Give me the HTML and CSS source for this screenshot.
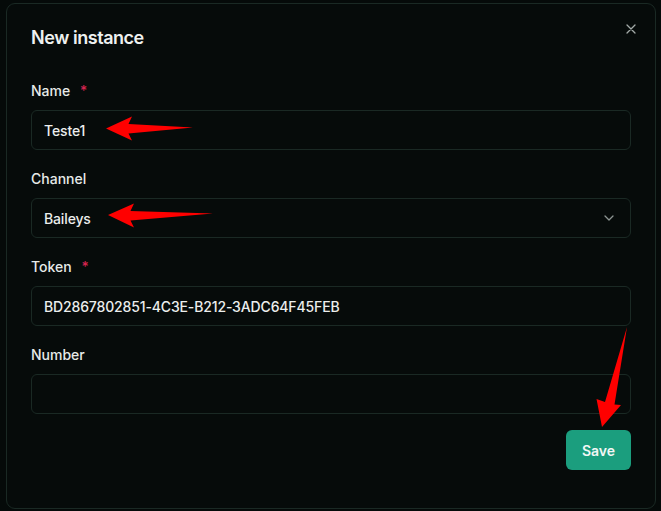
FILE: index.html
```html
<!DOCTYPE html>
<html lang="en">
<head>
    <meta charset="UTF-8">
    <meta name="viewport" content="width=device-width, initial-scale=1.0">
    <title>New instance</title>
    <link rel="stylesheet" href="styles.css">
</head>
<body>
    <div class="dialog">
        <button class="close" aria-label="Close">
            <svg width="10" height="10" viewBox="0 0 10 10"><path d="M1 1L9 9M9 1L1 9" stroke="#a3aaa8" stroke-width="1.3" stroke-linecap="round"/></svg>
        </button>
        <h2 class="title">New instance</h2>

        <form class="form">
            <div class="field">
                <label>Name <span class="req">*</span></label>
                <div class="input">Teste1</div>
            </div>
            <div class="field">
                <label>Channel</label>
                <div class="input select">
                    <span>Baileys</span>
                    <svg width="10" height="6" viewBox="0 0 10 6"><path d="M1 1L5 5L9 1" fill="none" stroke="#8d9593" stroke-width="1.3" stroke-linecap="round" stroke-linejoin="round"/></svg>
                </div>
            </div>
            <div class="field">
                <label>Token <span class="req">*</span></label>
                <div class="input">BD2867802851-4C3E-B212-3ADC64F45FEB</div>
            </div>
            <div class="field last">
                <label>Number</label>
                <div class="input"></div>
            </div>
            <div class="actions">
                <button type="button" class="save">Save</button>
            </div>
        </form>
    </div>

    <!-- annotation arrows -->
    <svg class="marks" width="661" height="511" viewBox="0 0 661 511">
        <path d="M106 128.5 L132 116.5 L128.5 124 L193 127.5 L128.5 133.5 L132 140.5 Z" fill="#ff0000"/>
        <path d="M108 215 L134 203.5 L130.5 211 L213 213.5 L130.5 220.5 L134 227.5 Z" fill="#ff0000"/>
        <path d="M602 427 L596.5 399 L605 402 L627 327 L614.5 404.5 L621 405 Z" fill="#ff0000"/>
    </svg>
</body>
</html>
```

FILE: styles.css
```css
body {
    margin: 0;
    padding: 3px 4px 2px 6px;
    background-color: #050a09;
    font-family: Inter, "Noto Sans", sans-serif;
    color: #e9edeb;
}

.dialog {
    position: relative;
    box-sizing: border-box;
    width: 650px;
    height: 506px;
    padding: 20px 24px;
    border: 1px solid #1a2924;
    border-radius: 9px;
    background-color: #060b0a;
}

.title {
    margin: 0 0 29px;
    font-size: 18px;
    line-height: 28px;
    font-weight: 600;
    letter-spacing: -0.025em;
    color: #eef1f0;
}

.close {
    position: absolute;
    top: 19px;
    right: 18px;
    width: 12px;
    height: 12px;
    padding: 0;
    border: none;
    background: none;
    display: flex;
    align-items: center;
    justify-content: center;
}

.field {
    display: flex;
    flex-direction: column;
    gap: 9px;
    margin-bottom: 19px;
}

.field.last {
    margin-bottom: 16px;
}

label {
    font-size: 14px;
    line-height: 20px;
    font-weight: 500;
    color: #e6eae8;
}

.req {
    margin-left: 6px;
    color: #d4244f;
}

.input {
    box-sizing: border-box;
    height: 40px;
    padding: 0 12px;
    border: 1px solid #1a2924;
    border-radius: 6px;
    background-color: #060b0a;
    display: flex;
    align-items: center;
    font-size: 14px;
    font-weight: 500;
    letter-spacing: -0.01em;
    color: #eceeed;
}

.select {
    justify-content: space-between;
    padding-right: 16px;
}

.actions {
    display: flex;
    justify-content: flex-end;
}

.save {
    width: 65px;
    height: 40px;
    border: none;
    border-radius: 6px;
    background-color: #1b9e7e;
    color: #f2f7f5;
    font-family: Inter, "Noto Sans", sans-serif;
    font-size: 14px;
    font-weight: 600;
}

.marks {
    position: absolute;
    top: 0;
    left: 0;
    pointer-events: none;
}
```
